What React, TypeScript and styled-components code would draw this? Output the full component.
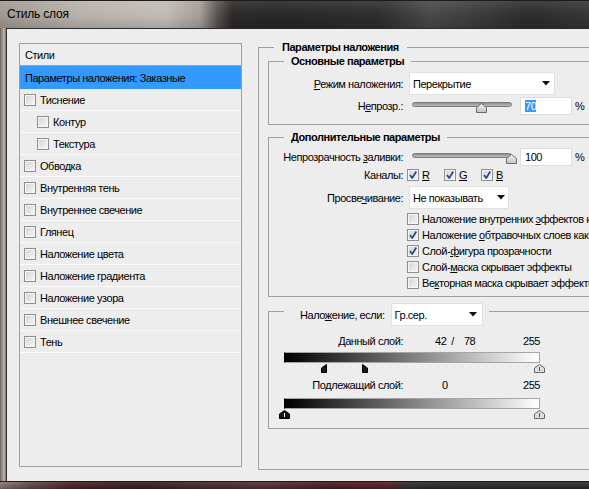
import React from 'react'
import styled, { createGlobalStyle } from 'styled-components'

const GlobalStyle = createGlobalStyle`
  html, body {
    margin: 0;
    padding: 0;
    background: #2a2a2a;
  }
  body {
    font-family: "Liberation Sans", Arial, sans-serif;
    font-size: 11px;
    letter-spacing: -0.45px;
    color: #000;
  }
`

// Window chrome
const Window = styled.div`
  width: 589px;
  height: 489px;
  overflow: hidden;
  display: grid;
  grid-template-rows: 28px 1fr 8px;
`

const TitleBar = styled.div`
  display: flex;
  align-items: center;
  padding: 0 7px 1px;
  font-size: 12px;
  letter-spacing: -0.2px;
  color: #000;
  background:
    linear-gradient(to bottom, rgba(255, 255, 255, 0.1), rgba(255, 255, 255, 0) 55%, rgba(0, 0, 0, 0.12)),
    linear-gradient(
      to right,
      #a0978f 0,
      #b8b1ab 80px,
      #c1bbb6 165px,
      #a39c97 200px,
      #55504d 218px,
      #2b2928 232px,
      #262626 280px,
      #2d2d2d 380px,
      #484848 430px,
      #3d3d3d 470px,
      #2b2b2b 530px,
      #353535 589px
    );
  border-top: 1px solid #1c1c1c;
`

const Middle = styled.div`
  display: flex;
  min-height: 0;
`

const LeftEdge = styled.div`
  width: 6px;
  background: linear-gradient(to right, #6b5e5a 0, #9a8d89 2px, #b7aeaa 4px, #8a7e7a 6px);
`

const BottomEdge = styled.div`
  background:
    linear-gradient(to bottom, rgba(255, 255, 255, 0.08), rgba(0, 0, 0, 0.25)),
    linear-gradient(
      to right,
      #8c7d7a 0,
      #6a4c4c 30px,
      #4e2429 70px,
      #3b1d22 140px,
      #4d2a31 200px,
      #5a3238 265px,
      #4a1f26 330px,
      #5b1f27 385px,
      #333030 405px,
      #2c2c2c 440px,
      #2e2e2e 589px
    );
  border-top: 1px solid #1a1a1a;
`

const Body = styled.div`
  flex: 1;
  display: flex;
  align-items: flex-start;
  gap: 16px;
  padding: 11px 0 0 12px;
  background: #ededed;
  border-left: 1px solid #2c2c2c;
  border-top: 1px solid #2c2c2c;
  overflow: hidden;
`

// Styles list on the left
const Panel = styled.div`
  flex: none;
  width: 223px;
  height: 424px;
  margin-top: 3px;
  box-sizing: border-box;
  border: 1px solid #a0a0a0;
  background: #ededed;
`

const PanelHeader = styled.div`
  height: 21px;
  display: flex;
  align-items: center;
  padding-left: 5px;
  border-bottom: 1px solid #a0a0a0;
`

const StyleItem = styled.div<{ $indent?: number; $active?: boolean }>`
  display: flex;
  align-items: center;
  gap: 4px;
  height: ${p => (p.$active ? 23 : 21)}px;
  padding-left: ${p => p.$indent ?? 4}px;
  background: ${p => (p.$active ? '#3399ff' : 'transparent')};
  border-bottom: ${p => (p.$active ? 'none' : '1px solid #fbfbfb')};
  white-space: nowrap;
`

const Box = styled.span<{ $size?: number }>`
  flex: none;
  position: relative;
  width: ${p => p.$size ?? 12}px;
  height: ${p => p.$size ?? 12}px;
  box-sizing: border-box;
  border: 1px solid #8e8f8f;
  background: linear-gradient(135deg, #cfd1d4 0%, #e6e6e6 50%, #f7f7f7 100%);
  box-shadow: inset 0 0 0 1px #f6f6f6;

  svg {
    position: absolute;
    left: 0;
    top: 0;
  }
`

const CheckBox = ({ checked }: { checked?: boolean }) => (
  <Box>
    {checked && (
      <svg width="10" height="10" viewBox="0 0 10 10">
        <path d="M2 5 L4.2 8 L8.3 1.6" fill="none" stroke="#2a4a8e" strokeWidth="1.8" strokeLinejoin="round" />
      </svg>
    )}
  </Box>
)

// Right side: grouped options
const Group = styled.fieldset<{ $pl?: number; $mt?: number; $h?: number }>`
  margin: ${p => p.$mt ?? 0}px 0 0;
  padding: 0 0 0 ${p => p.$pl ?? 0}px;
  border: 1px solid #a0a0a0;
  min-width: 0;
  ${p => (p.$h ? `height: ${p.$h}px; box-sizing: border-box;` : '')}
`

const Outer = styled(Group)`
  flex: none;
  width: 360px;
`

const Legend = styled.legend<{ $ml: number; $pad?: string }>`
  margin-left: ${p => p.$ml}px;
  padding: ${p => p.$pad ?? '0 7px'};
  font-weight: bold;
  line-height: 14px;
  white-space: nowrap;
`

const LegendRow = styled.legend`
  margin-left: 15px;
  padding: 6px 6px 0 16px;
  display: flex;
  align-items: center;
  gap: 6px;
`

const GroupBody = styled.div<{ $pt: number; $pb: number }>`
  padding: ${p => p.$pt}px 0 ${p => p.$pb}px;
`

const FormRow = styled.div<{ $h: number; $mt?: number }>`
  display: grid;
  grid-template-columns: 134px 1fr;
  column-gap: 6px;
  align-items: center;
  height: ${p => p.$h}px;
  margin-top: ${p => p.$mt ?? 0}px;
`

const Label = styled.div`
  text-align: right;
  white-space: nowrap;
`

const Controls = styled.div`
  display: flex;
  align-items: center;
  white-space: nowrap;
`

const U = styled.span`
  text-decoration: underline;
  text-underline-offset: 1px;
`

const SelectBox = styled.div<{ $w: number; $pr: number }>`
  width: ${p => p.$w}px;
  height: 23px;
  box-sizing: border-box;
  display: flex;
  align-items: center;
  justify-content: space-between;
  padding: 0 ${p => p.$pr}px 0 3px;
  background: #fff;
  border: 1px solid #e1e1e1;
  white-space: nowrap;
  font-weight: normal;
`

const Select = ({ value, w, pr }: { value: string; w: number; pr: number }) => (
  <SelectBox $w={w} $pr={pr}>
    <span>{value}</span>
    <svg width="8" height="5" viewBox="0 0 8 5">
      <path d="M0 0 H8 L4 4.5 Z" fill="#111" />
    </svg>
  </SelectBox>
)

const SliderBox = styled.div`
  position: relative;
  width: 100px;
  height: 12px;
  margin-left: 3px;
`

const Track = styled.div`
  height: 5px;
  margin-top: 2px;
  box-sizing: border-box;
  border: 1px solid #7c7c7c;
  border-radius: 3px;
  background: linear-gradient(to bottom, #8e8e8e, #bdbdbd);
`

const SliderThumb = styled.svg`
  position: absolute;
  top: 3px;
`

const Slider = ({ value }: { value: number }) => (
  <SliderBox>
    <Track />
    <SliderThumb width="11" height="10" viewBox="0 0 11 10" style={{ left: Math.round((value / 100) * 99) - 5 }}>
      <defs>
        <linearGradient id="thumbFill" x1="0" y1="0" x2="0" y2="1">
          <stop offset="0" stopColor="#f2f2f2" />
          <stop offset="1" stopColor="#c4c4c4" />
        </linearGradient>
      </defs>
      <path d="M0.5 9.5 V4.5 L5.5 0.5 L10.5 4.5 V9.5 Z" fill="url(#thumbFill)" stroke="#6a6a6a" />
    </SliderThumb>
  </SliderBox>
)

const NumField = styled.div`
  width: 52px;
  height: 18px;
  margin-left: 8px;
  box-sizing: border-box;
  display: flex;
  align-items: center;
  padding-left: 4px;
  background: #fff;
  border: 1px solid #dcdcdc;
`

const Picked = styled.span`
  background: #3399ff;
  color: #fff;
`

const Percent = styled.span`
  margin-left: 3px;
`

const Channel = styled.span`
  display: flex;
  align-items: center;
  gap: 3px;
  width: 37px;
`

const ChannelSet = styled.div`
  display: flex;
  margin-left: -2px;
`

const OptionList = styled.div`
  margin-top: 3px;
  padding-left: 138px;
`

const Option = styled.div`
  display: flex;
  align-items: center;
  gap: 3px;
  height: 16px;
  white-space: nowrap;
`

const ValueRow = styled.div<{ $mt: number; $pl: number }>`
  display: grid;
  grid-template-columns: 134px 131px;
  column-gap: 6px;
  align-items: center;
  height: 14px;
  margin-top: ${p => p.$mt}px;

  & > div:last-child {
    display: flex;
    justify-content: space-between;
    padding-left: ${p => p.$pl}px;
  }
`

const Slash = styled.span`
  margin: 0 10px 0 5px;
`

const GradientBar = styled.div<{ $mt: number }>`
  width: 256px;
  height: 11px;
  margin: ${p => p.$mt}px 0 0 15px;
  box-sizing: border-box;
  border: 1px solid #a5a5a5;
  border-left-color: #000;
  background: linear-gradient(to right, #000, #fff);
`

const ThumbRow = styled.div`
  position: relative;
  width: 256px;
  height: 10px;
  margin-left: 15px;
`

const RangeThumb = styled.svg`
  position: absolute;
  top: 1px;
`

type ThumbKind = 'white' | 'black' | 'low' | 'high'

const Thumb = ({ value, kind }: { value: number; kind: ThumbKind }) => {
  if (kind === 'low' || kind === 'high') {
    const left = kind === 'low' ? value - 5 : value
    const d = kind === 'low' ? 'M0.5 8.5 V4 L5.5 0.5 V8.5 Z' : 'M0.5 8.5 V0.5 L5.5 4 V8.5 Z'
    return (
      <RangeThumb width="6" height="9" viewBox="0 0 6 9" style={{ left }}>
        <path d={d} fill="#1a1a1a" stroke="#000" />
      </RangeThumb>
    )
  }
  const dark = kind === 'black'
  return (
    <RangeThumb width="11" height="9" viewBox="0 0 11 9" style={{ left: value - 5 }}>
      <path d="M0.5 8.5 V4 L5.5 0.5 L10.5 4 V8.5 Z" fill={dark ? '#141414' : '#dedede'} stroke={dark ? '#000' : '#666'} />
      <path d="M5.5 3 V7" stroke={dark ? '#fff' : '#555'} strokeWidth="1" />
    </RangeThumb>
  )
}

const effects: { name: string; indent?: number }[] = [
  { name: 'Тиснение' },
  { name: 'Контур', indent: 17 },
  { name: 'Текстура', indent: 17 },
  { name: 'Обводка' },
  { name: 'Внутренняя тень' },
  { name: 'Внутреннее свечение' },
  { name: 'Глянец' },
  { name: 'Наложение цвета' },
  { name: 'Наложение градиента' },
  { name: 'Наложение узора' },
  { name: 'Внешнее свечение' },
  { name: 'Тень' },
]

const App = () => {
  return (
    <>
      <GlobalStyle />
      <Window>
        <TitleBar>Стиль слоя</TitleBar>
        <Middle>
          <LeftEdge />
          <Body>
            <Panel>
              <PanelHeader>Стили</PanelHeader>
              <StyleItem $active $indent={5}>Параметры наложения: Заказные</StyleItem>
              {effects.map(e => (
                <StyleItem key={e.name} $indent={e.indent}>
                  <CheckBox />
                  {e.name}
                </StyleItem>
              ))}
            </Panel>

            <Outer $pl={9} $h={430}>
              <Legend $ml={6} $pad="0 8px">Параметры наложения</Legend>

              <Group>
                <Legend $ml={15}>Основные параметры</Legend>
                <GroupBody $pt={4} $pb={7}>
                  <FormRow $h={22}>
                    <Label>
                      <U>Р</U>ежим наложения:
                    </Label>
                    <Controls>
                      <Select value="Перекрытие" w={146} pr={4} />
                    </Controls>
                  </FormRow>
                  <FormRow $h={22} $mt={1}>
                    <Label>
                      Н<U>е</U>прозр.:
                    </Label>
                    <Controls>
                      <Slider value={70} />
                      <NumField>
                        <Picked>70</Picked>
                      </NumField>
                      <Percent>%</Percent>
                    </Controls>
                  </FormRow>
                </GroupBody>
              </Group>

              <Group $mt={5}>
                <Legend $ml={15}>Дополнительные параметры</Legend>
                <GroupBody $pt={2} $pb={5}>
                  <FormRow $h={21}>
                    <Label>
                      Непрозрачность <U>з</U>аливки:
                    </Label>
                    <Controls>
                      <Slider value={100} />
                      <NumField>100</NumField>
                      <Percent>%</Percent>
                    </Controls>
                  </FormRow>
                  <FormRow $h={16}>
                    <Label>Каналы:</Label>
                    <ChannelSet>
                      {['R', 'G', 'B'].map(c => (
                        <Channel key={c}>
                          <CheckBox checked />
                          <U>{c}</U>
                        </Channel>
                      ))}
                    </ChannelSet>
                  </FormRow>
                  <FormRow $h={22} $mt={3}>
                    <Label>
                      Просве<U>ч</U>ивание:
                    </Label>
                    <Controls>
                      <Select value="Не показывать" w={100} pr={3} />
                    </Controls>
                  </FormRow>
                  <OptionList>
                    <Option>
                      <CheckBox />
                      <span>
                        Наложение внутренних <U>э</U>ффектов как группы
                      </span>
                    </Option>
                    <Option>
                      <CheckBox checked />
                      <span>
                        Наложение <U>о</U>бтравочных слоев как группы
                      </span>
                    </Option>
                    <Option>
                      <CheckBox checked />
                      <span>
                        Слой-<U>ф</U>игура прозрачности
                      </span>
                    </Option>
                    <Option>
                      <CheckBox />
                      <span>
                        Слой-<U>м</U>аска скрывает эффекты
                      </span>
                    </Option>
                    <Option>
                      <CheckBox />
                      <span>
                        Ве<U>к</U>торная маска скрывает эффекты
                      </span>
                    </Option>
                  </OptionList>
                </GroupBody>
              </Group>

              <Group>
                <LegendRow>
                  <span style={{ fontWeight: 'normal' }}>
                    Нало<U>ж</U>ение, если:
                  </span>
                  <Select value="Гр.сер." w={92} pr={5} />
                </LegendRow>
                <GroupBody $pt={0} $pb={9}>
                  <ValueRow $mt={8} $pl={26}>
                    <Label>Данный слой:</Label>
                    <div>
                      <span>
                        42<Slash>/</Slash>78
                      </span>
                      <span>255</span>
                    </div>
                  </ValueRow>
                  <GradientBar $mt={4} />
                  <ThumbRow>
                    <Thumb value={42} kind="low" />
                    <Thumb value={78} kind="high" />
                    <Thumb value={255} kind="white" />
                  </ThumbRow>
                  <ValueRow $mt={5} $pl={33}>
                    <Label>Подлежащий слой:</Label>
                    <div>
                      <span>0</span>
                      <span>255</span>
                    </div>
                  </ValueRow>
                  <GradientBar $mt={6} />
                  <ThumbRow>
                    <Thumb value={0} kind="black" />
                    <Thumb value={255} kind="white" />
                  </ThumbRow>
                </GroupBody>
              </Group>
            </Outer>
          </Body>
        </Middle>
        <BottomEdge />
      </Window>
    </>
  )
}

export default App
